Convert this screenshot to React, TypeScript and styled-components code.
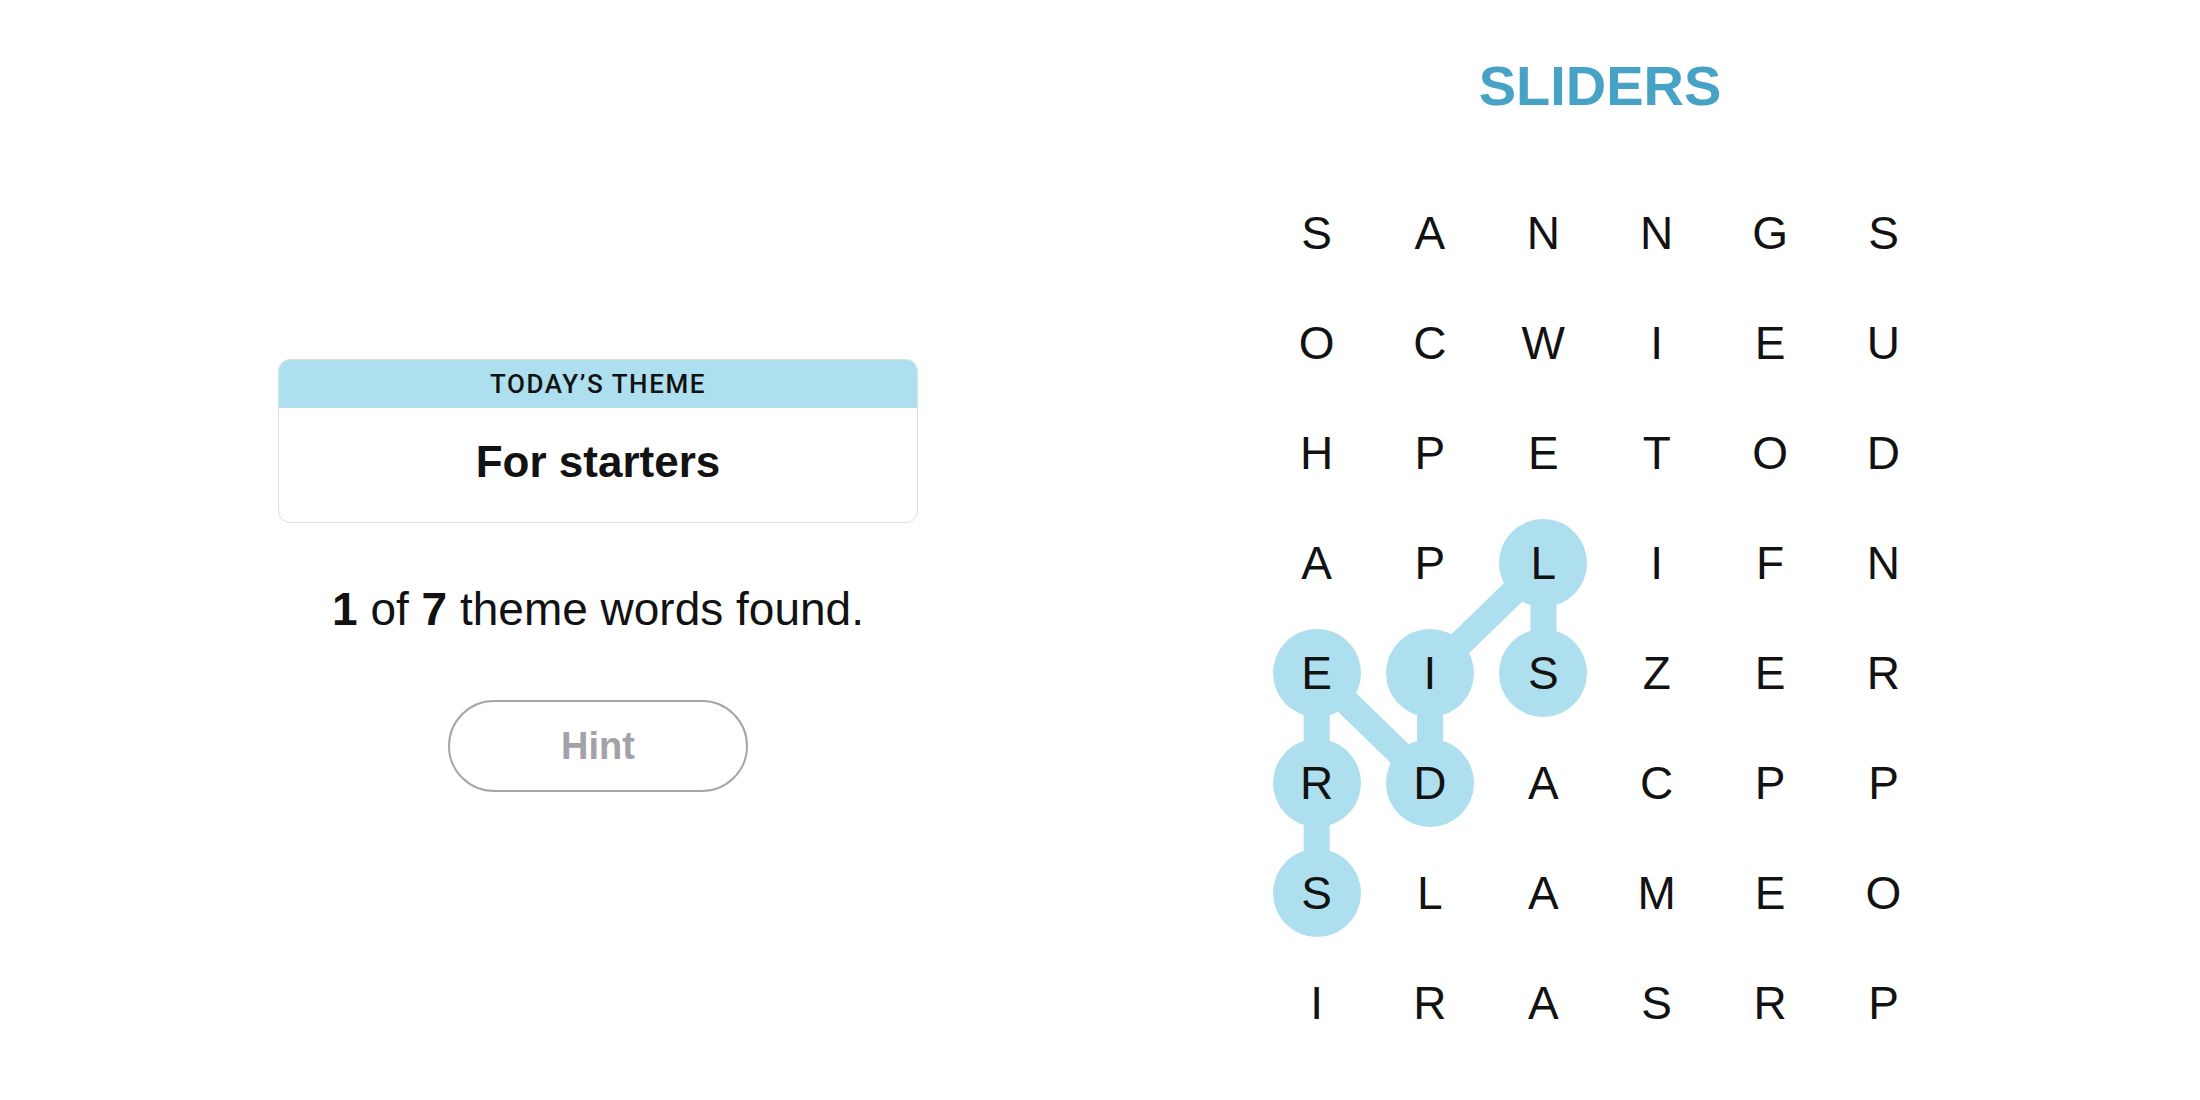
import React from "react";
import styled, { createGlobalStyle } from "styled-components";

const GlobalStyle = createGlobalStyle`
  html, body {
    margin: 0;
    padding: 0;
    background: #ffffff;
  }
  body {
    font-family: "Liberation Sans", Arial, sans-serif;
    color: #121212;
  }
`;

const COL_W = 113.4;
const ROW_H = 110;
const BLUE = "#aedfee";

const GRID = [
  "SANNGS",
  "OCWIEU",
  "HPETOD",
  "APLIFN",
  "EISZER",
  "RDACPP",
  "SLAMEO",
  "IRASRP",
];

// path of the found word, in order (row, col)
const FOUND_PATH: [number, number][] = [
  [4, 2],
  [3, 2],
  [4, 1],
  [5, 1],
  [4, 0],
  [5, 0],
  [6, 0],
];

const Page = styled.main`
  display: grid;
  grid-template-columns: 1196px 808px;
  width: 2200px;
  height: 1100px;
  overflow: hidden;
`;

const InfoColumn = styled.section`
  display: flex;
  flex-direction: column;
  align-items: center;
  padding-top: 359px;
`;

const ThemeCard = styled.div`
  width: 640px;
  box-sizing: border-box;
  border: 1px solid #dedede;
  border-radius: 12px;
  overflow: hidden;
  background: #fff;
`;

const ThemeHeader = styled.div`
  height: 48px;
  display: flex;
  align-items: center;
  justify-content: center;
  background: ${BLUE};
  font-family: Roboto, "Liberation Sans", sans-serif;
  font-weight: 500;
  font-size: 26px;
  letter-spacing: 1.6px;
  color: #121212;
`;

const ThemeBody = styled.div`
  height: 114px;
  padding-bottom: 6px;
  box-sizing: border-box;
  display: flex;
  align-items: center;
  justify-content: center;
  font-weight: 700;
  font-size: 44px;
  color: #121212;
`;

const Progress = styled.p`
  margin: 60px 0 0;
  font-size: 46px;
  line-height: 52px;
  color: #121212;
  b {
    font-weight: 700;
  }
`;

const HintButton = styled.button`
  margin-top: 65px;
  width: 300px;
  height: 92px;
  border-radius: 46px;
  border: 2px solid #a6a6a6;
  background: #fff;
  font-family: "Liberation Sans", Arial, sans-serif;
  font-weight: 700;
  font-size: 38px;
  color: #a2a2a8;
  cursor: pointer;
`;

const BoardColumn = styled.section`
  display: flex;
  flex-direction: column;
  align-items: center;
  padding-top: 58px;
`;

const Title = styled.h1`
  margin: 0;
  font-size: 56px;
  line-height: 56px;
  font-weight: 700;
  color: #47a3c6;
`;

const Board = styled.div`
  position: relative;
  margin-top: 64px;
  display: grid;
  grid-template-columns: repeat(6, ${COL_W}px);
  grid-template-rows: repeat(8, ${ROW_H}px);
`;

const Links = styled.svg`
  position: absolute;
  left: 0;
  top: 0;
  pointer-events: none;
`;

const Cell = styled.div`
  position: relative;
  display: flex;
  align-items: center;
  justify-content: center;
`;

const Letter = styled.span<{ $found?: boolean }>`
  width: 88px;
  height: 88px;
  border-radius: 50%;
  display: flex;
  align-items: center;
  justify-content: center;
  font-size: 46px;
  color: #121212;
  background: ${(p) => (p.$found ? BLUE : "transparent")};
`;

function center(r: number, c: number) {
  return { x: c * COL_W + COL_W / 2, y: r * ROW_H + ROW_H / 2 };
}

export default function App() {
  const found = new Set(FOUND_PATH.map(([r, c]) => `${r}-${c}`));
  const segments = FOUND_PATH.slice(1).map((p, i) => {
    const a = center(...FOUND_PATH[i]);
    const b = center(...p);
    return { a, b };
  });

  return (
    <>
      <GlobalStyle />
      <Page>
        <InfoColumn>
          <ThemeCard>
            <ThemeHeader>TODAY’S THEME</ThemeHeader>
            <ThemeBody>For starters</ThemeBody>
          </ThemeCard>
          <Progress>
            <b>1</b> of <b>7</b> theme words found.
          </Progress>
          <HintButton>Hint</HintButton>
        </InfoColumn>

        <BoardColumn>
          <Title>SLIDERS</Title>
          <Board>
            <Links width={COL_W * 6} height={ROW_H * 8}>
              {segments.map((s, i) => (
                <line
                  key={i}
                  x1={s.a.x}
                  y1={s.a.y}
                  x2={s.b.x}
                  y2={s.b.y}
                  stroke={BLUE}
                  strokeWidth={26}
                />
              ))}
            </Links>
            {GRID.map((row, r) =>
              row.split("").map((ch, c) => (
                <Cell key={`${r}-${c}`}>
                  <Letter $found={found.has(`${r}-${c}`)}>{ch}</Letter>
                </Cell>
              ))
            )}
          </Board>
        </BoardColumn>
      </Page>
    </>
  );
}
